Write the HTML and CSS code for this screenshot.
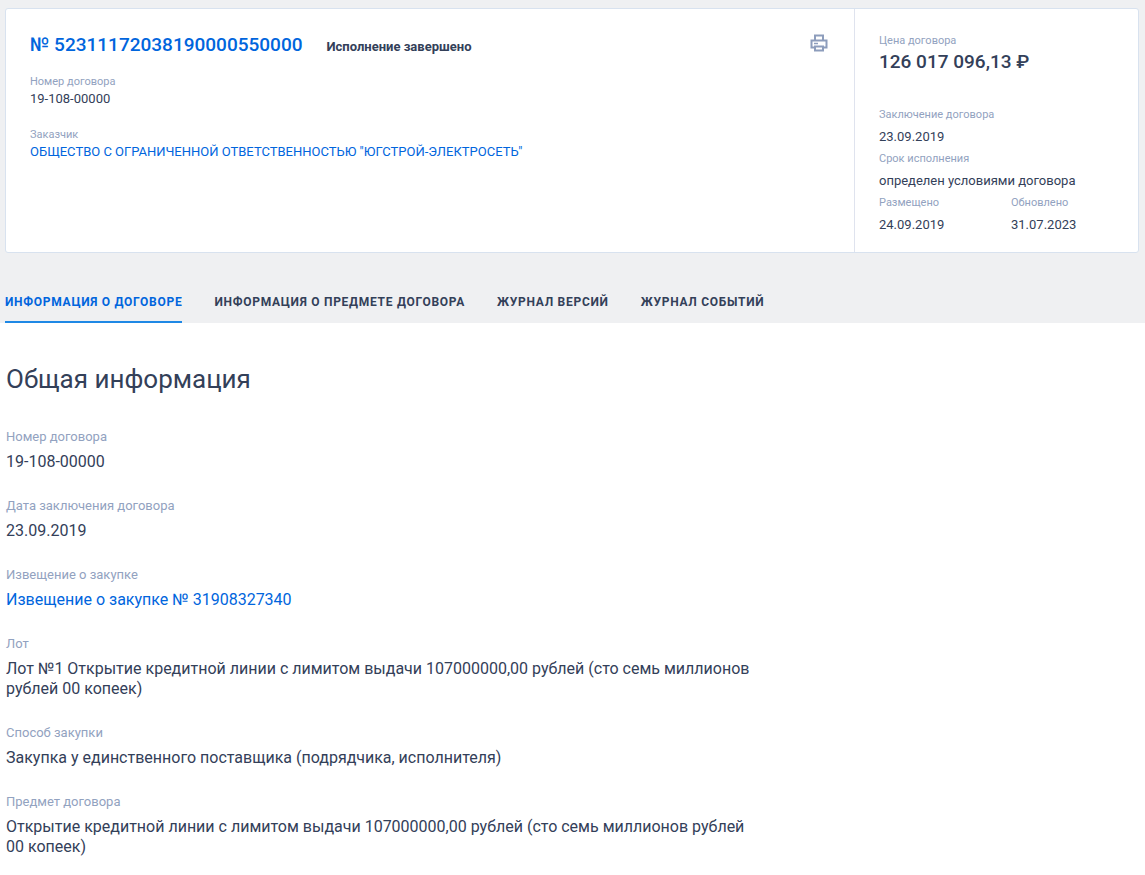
FILE: index.html
```html
<!DOCTYPE html>
<html lang="ru">
<head>
<meta charset="utf-8">
<meta name="viewport" content="width=device-width, initial-scale=1">
<title>Договор</title>
<link rel="stylesheet" href="styles.css">
</head>
<body>
<header class="top">
  <section class="card">
    <div class="card-main">
      <div class="card-head">
        <a class="card-number" href="#">№ 52311172038190000550000</a>
        <span class="card-status">Исполнение завершено</span>
        <button class="print" type="button" aria-label="Печать">
          <svg width="18" height="18" viewBox="0 0 18 18" fill="none" stroke="currentColor" stroke-width="2">
            <path d="M5 6V1.5h8V6M5 13.5H1.5v-7h15v7H13"/>
            <path d="M5 12.5h8v4H5z"/>
            <path d="M4 9.5h4" stroke-width="1.5"/>
          </svg>
        </button>
      </div>
      <dl class="brief">
        <div class="brief-item"><dt>Номер договора</dt><dd>19-108-00000</dd></div>
        <div class="brief-item"><dt>Заказчик</dt><dd><a href="#">ОБЩЕСТВО С ОГРАНИЧЕННОЙ ОТВЕТСТВЕННОСТЬЮ "ЮГСТРОЙ-ЭЛЕКТРОСЕТЬ"</a></dd></div>
      </dl>
    </div>
    <dl class="card-side">
      <div class="price"><dt>Цена договора</dt><dd>126 017 096,13 ₽</dd></div>
      <div class="side-item"><dt>Заключение договора</dt><dd>23.09.2019</dd></div>
      <div class="side-item"><dt>Срок исполнения</dt><dd>определен условиями договора</dd></div>
      <div class="side-item"><dt>Размещено</dt><dd>24.09.2019</dd></div>
      <div class="side-item"><dt>Обновлено</dt><dd>31.07.2023</dd></div>
    </dl>
  </section>
  <nav class="tabs">
    <a class="tab tab-active" href="#">Информация о договоре</a>
    <a class="tab" href="#">Информация о предмете договора</a>
    <a class="tab" href="#">Журнал версий</a>
    <a class="tab" href="#">Журнал событий</a>
  </nav>
</header>
<main class="content">
  <h2 class="heading">Общая информация</h2>
  <dl class="info">
    <div class="info-item"><dt>Номер договора</dt><dd>19-108-00000</dd></div>
    <div class="info-item"><dt>Дата заключения договора</dt><dd>23.09.2019</dd></div>
    <div class="info-item"><dt>Извещение о закупке</dt><dd><a href="#">Извещение о закупке № 31908327340</a></dd></div>
    <div class="info-item"><dt>Лот</dt><dd>Лот №1 Открытие кредитной линии с лимитом выдачи 107000000,00 рублей (сто семь миллионов рублей 00 копеек)</dd></div>
    <div class="info-item"><dt>Способ закупки</dt><dd>Закупка у единственного поставщика (подрядчика, исполнителя)</dd></div>
    <div class="info-item"><dt>Предмет договора</dt><dd>Открытие кредитной линии с лимитом выдачи 107000000,00 рублей (сто семь миллионов рублей 00 копеек)</dd></div>
  </dl>
</main>
</body>
</html>
```
FILE: styles.css
```css
* {
  box-sizing: border-box;
}

body {
  margin: 0;
  background: #fff;
  color: #334059;
  font-family: Roboto, "Liberation Sans", sans-serif;
  font-size: 16px;
  line-height: 20px;
}

dl,
dd,
h2 {
  margin: 0;
}

dt {
  color: #92a2c0;
}

a {
  color: #0065dd;
  text-decoration: none;
}

.top {
  padding: 8px 6px 0 5px;
  background: #eff0f2;
}

.card {
  display: grid;
  grid-template-columns: 1fr 284px;
  border: 1px solid #d8e2ef;
  border-radius: 3px;
  background: #fff;
}

.card-main {
  padding: 24px 26px 24px 24px;
}

.card-head {
  display: flex;
  align-items: baseline;
  gap: 24px;
}

.card-number {
  font-size: 19px;
  font-weight: 500;
  line-height: 24px;
}

.card-status {
  font-size: 13px;
  font-weight: 700;
}

.print {
  align-self: flex-start;
  display: block;
  margin-left: auto;
  padding: 1px 0;
  border: 0;
  background: none;
  color: #8d9dbc;
  cursor: pointer;
}

.print svg {
  display: block;
}

.brief {
  display: grid;
  gap: 19px;
  margin-top: 17px;
  font-size: 13px;
  line-height: 18px;
}

.brief dt {
  font-size: 11px;
  line-height: 16px;
}

.card-side {
  display: grid;
  grid-template-columns: 132px 1fr;
  align-content: start;
  padding: 24px 24px 13px;
  border-left: 1px solid #dfe3ee;
  font-size: 13px;
}

.card-side dt {
  font-size: 11px;
  line-height: 16px;
}

.card-side dd {
  line-height: 28px;
}

.price,
.side-item:nth-child(2),
.side-item:nth-child(3) {
  grid-column: 1 / -1;
}

.price {
  padding-bottom: 32px;
}

.card-side .price dd {
  font-size: 19px;
  font-weight: 500;
  line-height: 26px;
}

.tabs {
  display: flex;
  flex-wrap: wrap;
  gap: 32px;
  margin-top: 39px;
}

.tab {
  padding: 0 0 9px;
  border-bottom: 2px solid transparent;
  color: #334059;
  font-size: 12px;
  font-weight: 700;
  letter-spacing: 0.06em;
  text-transform: uppercase;
}

.tab-active {
  border-color: #1e88e5;
  color: #0065dd;
}

.content {
  padding: 40px 6px 16px;
}

.heading {
  font-size: 26px;
  font-weight: 400;
  line-height: 32px;
}

.info {
  display: grid;
  gap: 25px;
  max-width: 760px;
  margin-top: 33px;
}

.info dt {
  margin-bottom: 6px;
  font-size: 13px;
  line-height: 18px;
}
```
